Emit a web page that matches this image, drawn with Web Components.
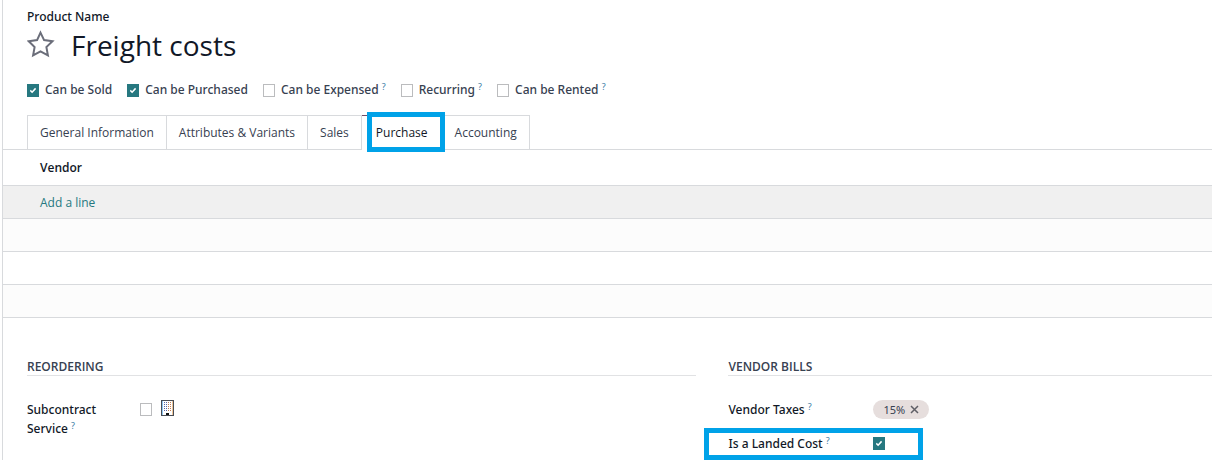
<!DOCTYPE html>
<html lang="en">
<head>
<meta charset="utf-8">
<meta name="viewport" content="width=device-width, initial-scale=1">
<title>Freight costs</title>
<style>
  body {
    --label-font: "Noto Sans", "Open Sans", sans-serif;
    margin: 0;
    background: #fff;
    color: #111827;
    font: 12px/19px "Open Sans", "Noto Sans", sans-serif;
  }
</style>
</head>
<body>
<form-sheet>
  <product-title value="Freight costs">Product Name</product-title>
  <option-bar>
    <check-option checked>Can be Sold</check-option>
    <check-option checked>Can be Purchased</check-option>
    <check-option help="Can be selected in an expense">Can be Expensed</check-option>
    <check-option help="Sold as a subscription">Recurring</check-option>
    <check-option help="Available for rental">Can be Rented</check-option>
  </option-bar>
  <tab-strip>
    <tab-item>General Information</tab-item>
    <tab-item>Attributes &amp; Variants</tab-item>
    <tab-item>Sales</tab-item>
    <tab-item active marked>Purchase</tab-item>
    <tab-item>Accounting</tab-item>
  </tab-strip>
  <vendor-list></vendor-list>
  <field-columns>
    <field-group heading="Reordering">
      <form-field>
        <label slot="label" for="subcontract">Subcontract Service <help-mark></help-mark></label>
        <input type="checkbox" id="subcontract">
        <company-icon></company-icon>
      </form-field>
    </field-group>
    <field-group heading="Vendor Bills" wide>
      <form-field>
        <span slot="label">Vendor Taxes <help-mark></help-mark></span>
        <tax-tag>15%</tax-tag>
      </form-field>
      <form-field marked>
        <label slot="label" for="landed-cost">Is a Landed Cost <help-mark></help-mark></label>
        <input type="checkbox" id="landed-cost" checked>
      </form-field>
    </field-group>
  </field-columns>
</form-sheet>

<script>
const tick = `url("data:image/svg+xml,%3Csvg xmlns='http://www.w3.org/2000/svg' viewBox='0 0 12 12'%3E%3Cpath d='M3.3 5.700l1.8 1.7 3.5-3.7' fill='none' stroke='%23fff' stroke-width='1.5'/%3E%3C/svg%3E")`

const checkboxRules = `
    appearance: none;
    flex: none;
    box-sizing: border-box;
    width: 12px;
    height: 13px;
    margin: 0;
    border: 1px solid #bbbcbe;
    background: #fff;
`

const checkedRules = `
    border-color: #267880;
    background: #267880 ${tick} center / 12px no-repeat;
`

/**
 * Register a custom element with an open shadow root cloned from a template.
 *
 * @param {string} name - The tag name.
 * @param {string} html - The styles and markup of the shadow root.
 * @param {Function} setup - Called once with the element and its shadow root.
 */
function define (name, html, setup) {
  const template = document.createElement('template')
  template.innerHTML = html

  customElements.define(name, class extends HTMLElement {
    /**
     * Attach shadow-dom and template.
     */
    constructor () {
      super()
      this.attachShadow({ mode: 'open' })
        .appendChild(template.content.cloneNode(true))
      if (setup) {
        setup(this, this.shadowRoot)
      }
    }
  })
}

define('form-sheet', `
  <style>
    :host {
      --gutter: 24px;
      display: flex;
      flex-direction: column;
      margin-left: 2px;
      padding: 8px 0 7px;
      border-left: 1px solid #d8dadd;
      overflow: hidden;
    }
  </style>
  <slot></slot>
`)

define('product-title', `
  <style>
    :host {
      display: block;
      padding: 0 var(--gutter);
    }

    label {
      display: block;
      font-family: var(--label-font);
      line-height: 18px;
      font-weight: 500;
    }

    div {
      display: flex;
      align-items: center;
      gap: 16px;
      height: 38px;
    }

    button {
      display: flex;
      padding: 0;
      border: 0;
      background: none;
      color: #6b6e7a;
    }

    svg {
      width: 28px;
      height: 28px;
      margin-bottom: 2px;
    }

    input {
      flex: 1;
      min-width: 0;
      padding: 0;
      border: 0;
      outline: 0;
      background: none;
      color: inherit;
      font: 28px/38px "Open Sans", "Noto Sans", sans-serif;
    }
  </style>
  <label for="name"><slot></slot></label>
  <div>
    <button type="button" aria-label="Favorite">
      <svg viewBox="0 0 28 28" fill="none" stroke="currentColor" stroke-width="2">
        <path d="M13.5 2.600l3.600 7.500 8.400 1.200-6.100 5.800 1.500 8.200-7.400-4-7.400 4 1.500-8.200L1.800 11.300l8.300-1.200z"/>
      </svg>
    </button>
    <input id="name" type="text">
  </div>
`, (host, root) => {
  root.querySelector('input').value = host.getAttribute('value')
})

define('help-mark', `
  <style>
    :host {
      display: inline-block;
      vertical-align: 4px;
      color: #3a7ca5;
      font-size: 9px;
      line-height: 9px;
      font-weight: 400;
    }
  </style>
  ?
`)

define('option-bar', `
  <style>
    :host {
      display: flex;
      flex-wrap: wrap;
      gap: 8px 15px;
      margin-top: 17px;
      padding: 0 var(--gutter);
      line-height: 18px;
    }
  </style>
  <slot></slot>
`)

define('check-option', `
  <style>
    :host {
      display: block;
      color: #374151;
      font-family: var(--label-font);
      font-weight: 500;
    }

    label {
      display: flex;
      align-items: center;
      gap: 6px;
    }

    input {
      ${checkboxRules}
    }

    input:checked {
      ${checkedRules}
    }
  </style>
  <label><input type="checkbox"><span><slot></slot></span></label>
`, (host, root) => {
  root.querySelector('input').checked = host.hasAttribute('checked')
  if (host.hasAttribute('help')) {
    const mark = document.createElement('help-mark')
    mark.title = host.getAttribute('help')
    root.querySelector('span').append(' ', mark)
  }
})

define('tab-strip', `
  <style>
    :host {
      display: flex;
      margin-top: 16px;
      padding: 0 var(--gutter);
      border-bottom: 1px solid #d8dadd;
    }
  </style>
  <slot></slot>
`, host => host.setAttribute('role', 'tablist'))

define('tab-item', `
  <style>
    :host {
      position: relative;
      display: block;
      margin-bottom: -1px;
    }

    button {
      height: 35px;
      padding: 0 12px;
      border: 1px solid #d8dadd;
      border-left-width: 0;
      background: #fff;
      color: #374151;
      font: inherit;
    }

    :host(:first-child) button {
      border-left-width: 1px;
    }

    :host([active]) button {
      padding: 0 14px;
      border-top-color: #714b67;
      border-right-color: transparent;
      border-bottom-color: #fff;
      color: #111827;
    }

    /* Marker frame drawn over the tab edges */
    :host([marked])::after {
      content: "";
      position: absolute;
      z-index: 1;
      inset: -3px -2px -2px 5px;
      border: 5px solid #00a2e8;
      pointer-events: none;
    }
  </style>
  <button type="button" role="tab"><slot></slot></button>
`, (host, root) => {
  root.querySelector('button').setAttribute('aria-selected', host.hasAttribute('active'))
})

define('vendor-list', `
  <style>
    :host {
      display: block;
    }

    table {
      width: 100%;
      border-collapse: separate;
      border-spacing: 0;
    }

    th,
    td {
      box-sizing: border-box;
      height: 33px;
      padding: 0 37px;
      border-bottom: 1px solid #d8dadd;
      text-align: left;
    }

    th {
      height: 36px;
      font-weight: 600;
    }

    tbody tr:nth-child(even) {
      background: #fcfcfc;
    }

    tbody tr:first-child {
      background: #f0f0f0;
    }

    a {
      color: #267880;
      text-decoration: none;
    }
  </style>
  <table>
    <thead><tr><th scope="col">Vendor</th></tr></thead>
    <tbody>
      <tr><td><a href="#">Add a line</a></td></tr>
      <tr><td></td></tr>
      <tr><td></td></tr>
      <tr><td></td></tr>
    </tbody>
  </table>
`)

define('field-columns', `
  <style>
    :host {
      display: grid;
      grid-template-columns: 18fr 13fr;
      gap: 32px;
      margin-top: 41px;
      padding-left: var(--gutter);
    }
  </style>
  <slot></slot>
`)

define('field-group', `
  <style>
    :host {
      --label-width: 97px;
      display: flex;
      flex-direction: column;
      gap: 15px;
    }

    :host([wide]) {
      --label-width: 129px;
    }

    h2 {
      margin: 0 0 9px;
      border-bottom: 1px solid #e1e2e4;
      color: #374151;
      font-size: 12px;
      line-height: 16px;
      font-weight: 600;
      text-transform: uppercase;
    }
  </style>
  <h2></h2>
  <slot></slot>
`, (host, root) => {
  root.querySelector('h2').textContent = host.getAttribute('heading')
})

define('form-field', `
  <style>
    :host {
      position: relative;
      display: grid;
      grid-template-columns: var(--label-width) 1fr;
      column-gap: 16px;
      font-family: var(--label-font);
      font-weight: 500;
    }

    /* Marker frame drawn round the whole field */
    :host([marked])::after {
      content: "";
      position: absolute;
      inset: -6px auto -7px -24px;
      box-sizing: border-box;
      width: 219px;
      border: 5px solid #00a2e8;
      pointer-events: none;
    }

    .value {
      display: flex;
      align-items: center;
      gap: 9px;
      height: 19px;
    }

    ::slotted(input) {
      ${checkboxRules}
    }

    ::slotted(input:checked) {
      ${checkedRules}
    }
  </style>
  <slot name="label"></slot>
  <div class="value"><slot></slot></div>
`)

define('tax-tag', `
  <style>
    :host {
      display: flex;
      align-items: center;
      gap: 5px;
      height: 19px;
      padding: 0 10px;
      border-radius: 10px;
      background: #e6dedd;
      color: #374151;
      font-size: 11px;
      font-weight: 400;
    }

    button {
      display: flex;
      padding: 0;
      border: 0;
      background: none;
      color: #5f5f66;
    }

    svg {
      width: 9px;
      height: 9px;
    }
  </style>
  <slot></slot>
  <button type="button" aria-label="Remove">
    <svg viewBox="0 0 9 9" stroke="currentColor" stroke-width="1.5"><path d="M1 1l7 7M8 1L1 8"/></svg>
  </button>
`)

define('company-icon', `
  <style>
    :host {
      display: flex;
    }

    svg {
      width: 13px;
      height: 16px;
      margin-bottom: 3px;
    }
  </style>
  <svg viewBox="0 0 13 16" aria-hidden="true" shape-rendering="crispEdges">
    <path d="M0 0h13v16H0z" fill="#494d55"/>
    <path d="M1 1h11v14H1z" fill="#fff"/>
    <path d="M1 1h1v14H1z" fill="#8ec4ef"/>
    <path d="M11 1h1v14h-1z" fill="#f0c79a"/>
    <path d="M3.500 2v10M5.500 2v10" stroke="#5565a8" stroke-dasharray="1 1"/>
    <path d="M7.500 2v10M9.500 2v10" stroke="#c07a50" stroke-dasharray="1 1"/>
    <path d="M5 13h3v2H5z" fill="#111"/>
  </svg>
`)
</script>
</body>
</html>
